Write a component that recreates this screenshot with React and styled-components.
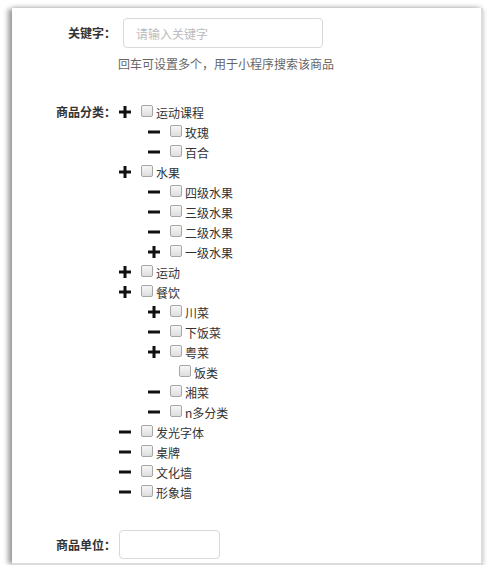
import React from 'react'
import styled, { createGlobalStyle } from 'styled-components'

const GlobalStyle = createGlobalStyle`
  html, body {
    margin: 0;
    padding: 0;
    background: #fff;
  }
  body {
    font-family: "Noto Sans CJK SC", "Liberation Sans", sans-serif;
    font-size: 12px;
    color: #333;
  }
`

// category tree, icon is what the toggle shows (plus / minus / none)
const categories = [
  {
    name: '运动课程',
    icon: 'plus',
    children: [
      { name: '玫瑰', icon: 'minus' },
      { name: '百合', icon: 'minus' },
    ],
  },
  {
    name: '水果',
    icon: 'plus',
    children: [
      { name: '四级水果', icon: 'minus' },
      { name: '三级水果', icon: 'minus' },
      { name: '二级水果', icon: 'minus' },
      { name: '一级水果', icon: 'plus' },
    ],
  },
  { name: '运动', icon: 'plus' },
  {
    name: '餐饮',
    icon: 'plus',
    children: [
      { name: '川菜', icon: 'plus' },
      { name: '下饭菜', icon: 'minus' },
      { name: '粤菜', icon: 'plus', children: [{ name: '饭类' }] },
      { name: '湘菜', icon: 'minus' },
      { name: 'n多分类', icon: 'minus' },
    ],
  },
  { name: '发光字体', icon: 'minus' },
  { name: '桌牌', icon: 'minus' },
  { name: '文化墙', icon: 'minus' },
  { name: '形象墙', icon: 'minus' },
]

const Toggle = ({ type }) => (
  <ToggleIcon viewBox="0 0 12 12">
    <rect x="0" y="4.5" width="12" height="3" fill="#111" />
    {type === 'plus' && <rect x="4.5" y="0" width="3" height="12" fill="#111" />}
  </ToggleIcon>
)

const TreeNodes = ({ nodes, nested }) => (
  <NodeList $nested={nested}>
    {nodes.map((node) => (
      <li key={node.name}>
        <NodeRow>
          {node.icon && <Toggle type={node.icon} />}
          <Check />
          <span>{node.name}</span>
        </NodeRow>
        {node.children && <TreeNodes nodes={node.children} nested />}
      </li>
    ))}
  </NodeList>
)

const App = () => {
  return (
    <>
      <GlobalStyle />
      <Panel>
        {/* keyword */}
        <FormRow>
          <Label $mid>关键字：</Label>
          <Field $offset={7}>
            <TextInput $width={200} $height={30} placeholder="请输入关键字" />
          </Field>
        </FormRow>
        <HelpRow>
          <Label />
          <Help>回车可设置多个，用于小程序搜索该商品</Help>
        </HelpRow>

        {/* category tree */}
        <FormRow $gap={28}>
          <Label>商品分类：</Label>
          <Field $offset={3}>
            <TreeNodes nodes={categories} />
          </Field>
        </FormRow>

        {/* unit */}
        <FormRow $gap={28}>
          <Label $mid>商品单位：</Label>
          <Field $offset={3}>
            <TextInput $width={101} $height={29} />
          </Field>
        </FormRow>
      </Panel>
    </>
  )
}

export default App

const Panel = styled.div`
  box-sizing: border-box;
  margin: 8px 0 0 12px;
  width: 471px;
  height: 557px;
  padding-top: 10px;
  background: #fff;
  border-right: 2px solid #dcdcdc;
  border-bottom: 2px solid #dcdcdc;
  box-shadow: -5px 0 5px -1px rgba(0, 0, 0, 0.38),
    0 -3px 4px -1px rgba(0, 0, 0, 0.12), 2px 2px 3px rgba(0, 0, 0, 0.1);
`

const FormRow = styled.div`
  display: flex;
  align-items: ${(p) => (p.$mid ? 'center' : 'flex-start')};
  margin-top: ${(p) => p.$gap || 0}px;
`

const HelpRow = styled.div`
  display: flex;
  margin-top: 6px;
`

const Label = styled.div`
  flex: none;
  width: 104px;
  text-align: right;
  font-weight: bold;
  color: #333;
  line-height: 20px;
  align-self: ${(p) => (p.$mid ? 'center' : 'flex-start')};
`

const Field = styled.div`
  margin-left: ${(p) => p.$offset}px;
`

const TextInput = styled.input`
  box-sizing: border-box;
  display: block;
  width: ${(p) => p.$width}px;
  height: ${(p) => p.$height}px;
  padding: 0 12px;
  border: 1px solid #d9d9d9;
  border-radius: 4px;
  font-family: inherit;
  font-size: 12px;
  color: #333;
  outline: none;
  &::placeholder {
    color: #bbb;
  }
`

const Help = styled.div`
  margin-left: 2px;
  color: #666;
  line-height: 20px;
`

const NodeList = styled.ul`
  list-style: none;
  margin: 0;
  padding: 0 0 0 ${(p) => (p.$nested ? 29 : 0)}px;
`

const NodeRow = styled.div`
  display: flex;
  align-items: center;
  height: 20px;
  color: #333;
  white-space: nowrap;
`

const ToggleIcon = styled.svg`
  flex: none;
  width: 12px;
  height: 12px;
  margin-right: 8px;
`

const Check = styled.span`
  flex: none;
  box-sizing: border-box;
  width: 12px;
  height: 12px;
  margin: -3px 3px 0 2px;
  border: 1px solid #a6a6a6;
  border-radius: 2px;
  background: linear-gradient(#f6f6f6, #dedede);
`
